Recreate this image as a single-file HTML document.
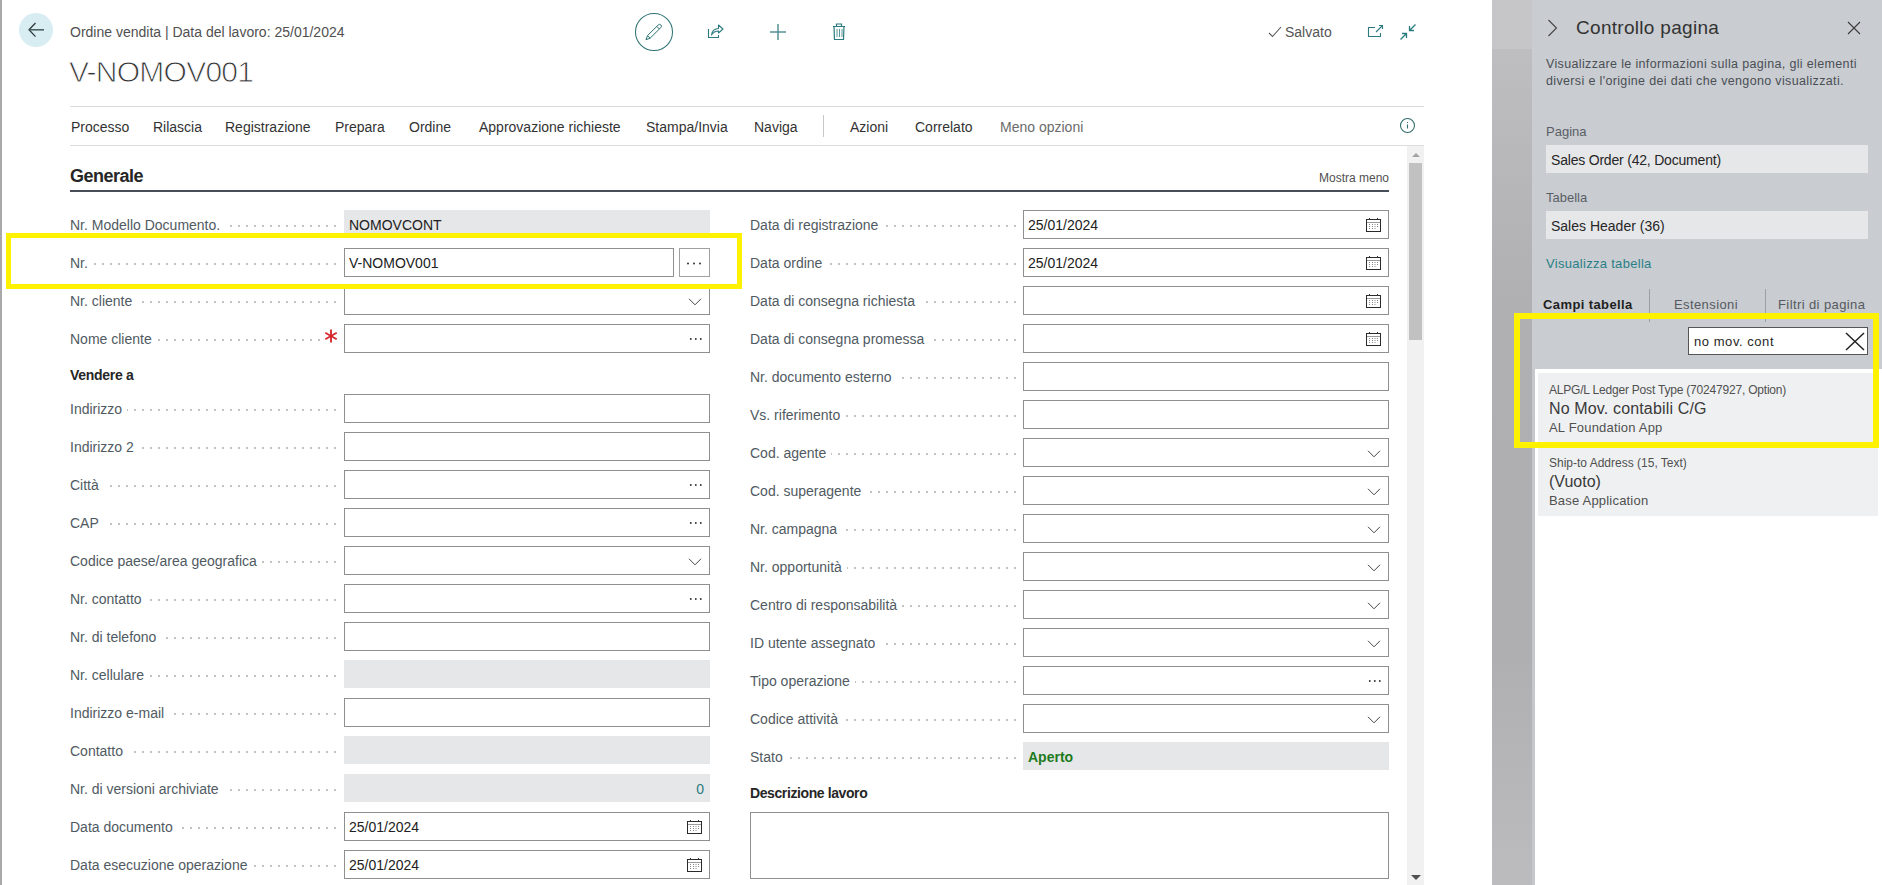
<!DOCTYPE html>
<html><head><meta charset="utf-8"><style>
html,body{margin:0;padding:0;}
body{width:1882px;height:885px;overflow:hidden;position:relative;background:#fff;font-family:"Liberation Sans", sans-serif;}
.a{position:absolute;}
.t{position:absolute;line-height:1;white-space:nowrap;}
.dots{background-image:radial-gradient(circle at 1px 2px, #c3c3c3 1px, rgba(255,255,255,0) 1.4px);background-size:8px 4px;background-position:0 0;background-repeat:repeat-x;}
</style></head><body>
<div class="a" style="left:0px;top:0px;width:2px;height:885px;background:#a9a9a9;"></div>
<div class="a" style="left:19px;top:13px;width:34px;height:34px;background:#d7edf1;border-radius:50%;"></div>
<svg width="20" height="16" viewBox="0 0 20 16" style="position:absolute;left:28px;top:22px"><polyline points="7.5,1 1,7.8 7.5,14.6" fill="none" stroke="#2f3a3d" stroke-width="1.3"/><line x1="1.3" y1="7.8" x2="16" y2="7.8" stroke="#4b6164" stroke-width="1.6"/></svg><div class="t" style="left:70px;top:25.1px;font-size:14px;color:#505050;font-weight:normal;">Ordine vendita | Data del lavoro: 25/01/2024</div>
<div class="t" style="left:69px;top:57.2px;font-size:30px;color:#333;font-weight:normal;letter-spacing:-0.75px;-webkit-text-stroke:0.9px #fff;paint-order:fill;">V-NOMOV001</div>
<svg width="40" height="40" viewBox="0 0 40 40" style="position:absolute;left:634px;top:12px"><circle cx="20" cy="20" r="18.5" fill="none" stroke="#2e7374" stroke-width="1.05"/><path d="M12 27.7 L13.5 23.6 L24.3 12.9 A1.84 1.84 0 0 1 26.9 15.5 L16.1 26.2 Z M13.5 23.6 L16.1 26.2 M22.8 14.4 L25.4 17" fill="none" stroke="#2e7374" stroke-width="1" stroke-linejoin="round"/></svg><svg width="18" height="16" viewBox="0 0 18 16" style="position:absolute;left:707px;top:23px"><path d="M1.5 6 V14.5 H11.5 V12" fill="none" stroke="#2b7b80" stroke-width="1.1"/><path d="M4.5 12 Q5.5 5.5 11.5 5.5 V2 L16 6 L11.5 10 V8 Q7 8 4.5 12 Z" fill="none" stroke="#2b7b80" stroke-width="1.1" stroke-linejoin="round"/></svg><svg width="18" height="18" viewBox="0 0 18 18" style="position:absolute;left:769px;top:23px"><line x1="9" y1="1" x2="9" y2="17" stroke="#4a8a8e" stroke-width="1.4"/><line x1="1" y1="9" x2="17" y2="9" stroke="#4a8a8e" stroke-width="1.4"/></svg><svg width="16" height="18" viewBox="0 0 16 18" style="position:absolute;left:831px;top:23px"><path d="M2 3.5 H14 M5.5 3.5 V1 H10.5 V3.5 M3 3.5 L3.5 16.5 H12.5 L13 3.5 " fill="none" stroke="#2b7b80" stroke-width="1.2"/><path d="M6 6 V14 M8.5 6 V14 M11 6 V14" fill="none" stroke="#2b7b80" stroke-width="0.8"/></svg><svg width="14" height="12" viewBox="0 0 14 12" style="position:absolute;left:1268px;top:26px"><polyline points="1,7 4.5,10.5 13,1" fill="none" stroke="#555" stroke-width="1.1"/></svg><div class="t" style="left:1285px;top:25.1px;font-size:14px;color:#555;font-weight:normal;">Salvato</div>
<svg width="18" height="16" viewBox="0 0 18 16" style="position:absolute;left:1367px;top:24px"><path d="M8 3.5 H1.5 V12.5 H13.5 V9" fill="none" stroke="#2b7b80" stroke-width="1.1"/><path d="M9 8 L15.5 1.5 M12 1.5 H15.5 V5" fill="none" stroke="#2b7b80" stroke-width="1.1"/></svg><svg width="18" height="18" viewBox="0 0 18 18" style="position:absolute;left:1399px;top:23px"><path d="M16.5 1.5 L10.5 7.5 M10.5 3 V7.5 H15 M1.5 16.5 L7.5 10.5 M3 10.5 H7.5 V15" fill="none" stroke="#2b7b80" stroke-width="1.3"/></svg><div class="a" style="left:70px;top:106px;width:1354px;height:1px;background:#dcdcdc;"></div>
<div class="a" style="left:70px;top:145px;width:1354px;height:1px;background:#dcdcdc;"></div>
<div class="t" style="left:71px;top:120.1px;font-size:14px;color:#333;font-weight:normal;">Processo</div>
<div class="t" style="left:153px;top:120.1px;font-size:14px;color:#333;font-weight:normal;">Rilascia</div>
<div class="t" style="left:225px;top:120.1px;font-size:14px;color:#333;font-weight:normal;">Registrazione</div>
<div class="t" style="left:335px;top:120.1px;font-size:14px;color:#333;font-weight:normal;">Prepara</div>
<div class="t" style="left:409px;top:120.1px;font-size:14px;color:#333;font-weight:normal;">Ordine</div>
<div class="t" style="left:479px;top:120.1px;font-size:14px;color:#333;font-weight:normal;">Approvazione richieste</div>
<div class="t" style="left:646px;top:120.1px;font-size:14px;color:#333;font-weight:normal;">Stampa/Invia</div>
<div class="t" style="left:754px;top:120.1px;font-size:14px;color:#333;font-weight:normal;">Naviga</div>
<div class="t" style="left:850px;top:120.1px;font-size:14px;color:#333;font-weight:normal;">Azioni</div>
<div class="t" style="left:915px;top:120.1px;font-size:14px;color:#333;font-weight:normal;">Correlato</div>
<div class="t" style="left:1000px;top:120.1px;font-size:14px;color:#6b6b6b;font-weight:normal;">Meno opzioni</div>
<div class="a" style="left:823px;top:115px;width:1px;height:22px;background:#c8c8c8;"></div>
<svg width="19" height="19" viewBox="0 0 19 19" style="position:absolute;left:1398px;top:116px"><circle cx="9.5" cy="9.5" r="7" fill="none" stroke="#336f6c" stroke-width="1.1"/><line x1="9.5" y1="8.5" x2="9.5" y2="12.5" stroke="#336f6c" stroke-width="1.1"/><rect x="9" y="6" width="1" height="1" fill="#336f6c"/></svg><div class="a" style="left:1407px;top:146px;width:17px;height:739px;background:#f1f1f1;"></div>
<div class="a" style="left:1409px;top:163px;width:13px;height:177px;background:#c1c1c1;"></div>
<svg width="10" height="6" viewBox="0 0 10 6" style="position:absolute;left:1411px;top:152px"><polygon points="1,5 5,1 9,5" fill="#a3a3a3"/></svg><svg width="10" height="6" viewBox="0 0 10 6" style="position:absolute;left:1411px;top:875px"><polygon points="0,0 5,5 10,0" fill="#505050"/></svg><div class="t" style="left:70px;top:166.8px;font-size:18px;color:#262626;font-weight:bold;letter-spacing:-0.5px;">Generale</div>
<div class="t" style="right:493px;top:171.8px;font-size:12px;color:#505050;font-weight:normal;">Mostra meno</div>
<div class="a" style="left:70px;top:190px;width:1319px;height:2px;background:#474d59;"></div>
<div class="a dots" style="left:70px;top:224px;width:268px;height:4px;"></div>
<div class="t" style="left:70px;top:218.1px;font-size:14px;color:#505a62;background:#fff;padding-right:5px">Nr. Modello Documento.</div>
<div class="a" style="left:344px;top:210px;width:366px;height:28px;background:#e6e7e8;"></div>
<div class="t" style="left:349px;top:218.1px;font-size:14px;color:#212121;font-weight:normal;">NOMOVCONT</div>
<div class="a dots" style="left:70px;top:262px;width:268px;height:4px;"></div>
<div class="t" style="left:70px;top:256.1px;font-size:14px;color:#505a62;background:#fff;padding-right:5px">Nr.</div>
<div class="a" style="left:344px;top:248px;width:330px;height:29px;border:1px solid #8f8f8f;box-sizing:border-box;background:#fff;"></div>
<div class="t" style="left:349px;top:256.1px;font-size:14px;color:#212121;font-weight:normal;">V-NOMOV001</div>
<div class="a" style="left:679px;top:248px;width:31px;height:29px;border:1px solid #a0a0a0;box-sizing:border-box;"></div>
<svg width="16" height="4" viewBox="0 0 16 4" style="position:absolute;left:686px;top:262px"><circle cx="2" cy="1.5" r="1" fill="#333"/><circle cx="8" cy="1.5" r="1" fill="#333"/><circle cx="14" cy="1.5" r="1" fill="#333"/></svg><div class="a dots" style="left:70px;top:300px;width:268px;height:4px;"></div>
<div class="t" style="left:70px;top:294.1px;font-size:14px;color:#505a62;background:#fff;padding-right:5px">Nr. cliente</div>
<div class="a" style="left:344px;top:286px;width:366px;height:29px;border:1px solid #8f8f8f;box-sizing:border-box;background:#fff;"></div>
<svg width="14" height="8" viewBox="0 0 14 8" style="position:absolute;left:688px;top:298px"><polyline points="1,0.8 7,6.8 13,0.8" fill="none" stroke="#444" stroke-width="1"/></svg><div class="a dots" style="left:70px;top:338px;width:268px;height:4px;"></div>
<div class="t" style="left:70px;top:332.1px;font-size:14px;color:#505a62;background:#fff;padding-right:5px">Nome cliente</div>
<div class="a" style="left:344px;top:324px;width:366px;height:29px;border:1px solid #8f8f8f;box-sizing:border-box;background:#fff;"></div>
<svg width="14" height="3" viewBox="0 0 14 3" style="position:absolute;left:689px;top:338px"><circle cx="1.8" cy="1" r="0.95" fill="#333"/><circle cx="6.8" cy="1" r="0.95" fill="#333"/><circle cx="11.8" cy="1" r="0.95" fill="#333"/></svg><div class="a dots" style="left:70px;top:408px;width:268px;height:4px;"></div>
<div class="t" style="left:70px;top:402.1px;font-size:14px;color:#505a62;background:#fff;padding-right:5px">Indirizzo</div>
<div class="a" style="left:344px;top:394px;width:366px;height:29px;border:1px solid #8f8f8f;box-sizing:border-box;background:#fff;"></div>
<div class="a dots" style="left:70px;top:446px;width:268px;height:4px;"></div>
<div class="t" style="left:70px;top:440.1px;font-size:14px;color:#505a62;background:#fff;padding-right:5px">Indirizzo 2</div>
<div class="a" style="left:344px;top:432px;width:366px;height:29px;border:1px solid #8f8f8f;box-sizing:border-box;background:#fff;"></div>
<div class="a dots" style="left:70px;top:484px;width:268px;height:4px;"></div>
<div class="t" style="left:70px;top:478.1px;font-size:14px;color:#505a62;background:#fff;padding-right:5px">Città</div>
<div class="a" style="left:344px;top:470px;width:366px;height:29px;border:1px solid #8f8f8f;box-sizing:border-box;background:#fff;"></div>
<svg width="14" height="3" viewBox="0 0 14 3" style="position:absolute;left:689px;top:484px"><circle cx="1.8" cy="1" r="0.95" fill="#333"/><circle cx="6.8" cy="1" r="0.95" fill="#333"/><circle cx="11.8" cy="1" r="0.95" fill="#333"/></svg><div class="a dots" style="left:70px;top:522px;width:268px;height:4px;"></div>
<div class="t" style="left:70px;top:516.1px;font-size:14px;color:#505a62;background:#fff;padding-right:5px">CAP</div>
<div class="a" style="left:344px;top:508px;width:366px;height:29px;border:1px solid #8f8f8f;box-sizing:border-box;background:#fff;"></div>
<svg width="14" height="3" viewBox="0 0 14 3" style="position:absolute;left:689px;top:522px"><circle cx="1.8" cy="1" r="0.95" fill="#333"/><circle cx="6.8" cy="1" r="0.95" fill="#333"/><circle cx="11.8" cy="1" r="0.95" fill="#333"/></svg><div class="a dots" style="left:70px;top:560px;width:268px;height:4px;"></div>
<div class="t" style="left:70px;top:554.1px;font-size:14px;color:#505a62;background:#fff;padding-right:5px">Codice paese/area geografica</div>
<div class="a" style="left:344px;top:546px;width:366px;height:29px;border:1px solid #8f8f8f;box-sizing:border-box;background:#fff;"></div>
<svg width="14" height="8" viewBox="0 0 14 8" style="position:absolute;left:688px;top:558px"><polyline points="1,0.8 7,6.8 13,0.8" fill="none" stroke="#444" stroke-width="1"/></svg><div class="a dots" style="left:70px;top:598px;width:268px;height:4px;"></div>
<div class="t" style="left:70px;top:592.1px;font-size:14px;color:#505a62;background:#fff;padding-right:5px">Nr. contatto</div>
<div class="a" style="left:344px;top:584px;width:366px;height:29px;border:1px solid #8f8f8f;box-sizing:border-box;background:#fff;"></div>
<svg width="14" height="3" viewBox="0 0 14 3" style="position:absolute;left:689px;top:598px"><circle cx="1.8" cy="1" r="0.95" fill="#333"/><circle cx="6.8" cy="1" r="0.95" fill="#333"/><circle cx="11.8" cy="1" r="0.95" fill="#333"/></svg><div class="a dots" style="left:70px;top:636px;width:268px;height:4px;"></div>
<div class="t" style="left:70px;top:630.1px;font-size:14px;color:#505a62;background:#fff;padding-right:5px">Nr. di telefono</div>
<div class="a" style="left:344px;top:622px;width:366px;height:29px;border:1px solid #8f8f8f;box-sizing:border-box;background:#fff;"></div>
<div class="a dots" style="left:70px;top:674px;width:268px;height:4px;"></div>
<div class="t" style="left:70px;top:668.1px;font-size:14px;color:#505a62;background:#fff;padding-right:5px">Nr. cellulare</div>
<div class="a" style="left:344px;top:660px;width:366px;height:28px;background:#e6e7e8;"></div>
<div class="a dots" style="left:70px;top:712px;width:268px;height:4px;"></div>
<div class="t" style="left:70px;top:706.1px;font-size:14px;color:#505a62;background:#fff;padding-right:5px">Indirizzo e-mail</div>
<div class="a" style="left:344px;top:698px;width:366px;height:29px;border:1px solid #8f8f8f;box-sizing:border-box;background:#fff;"></div>
<div class="a dots" style="left:70px;top:750px;width:268px;height:4px;"></div>
<div class="t" style="left:70px;top:744.1px;font-size:14px;color:#505a62;background:#fff;padding-right:5px">Contatto</div>
<div class="a" style="left:344px;top:736px;width:366px;height:28px;background:#e6e7e8;"></div>
<div class="a dots" style="left:70px;top:788px;width:268px;height:4px;"></div>
<div class="t" style="left:70px;top:782.1px;font-size:14px;color:#505a62;background:#fff;padding-right:5px">Nr. di versioni archiviate</div>
<div class="a" style="left:344px;top:774px;width:366px;height:28px;background:#e6e7e8;"></div>
<div class="t" style="right:1178px;top:782.1px;font-size:14px;color:#2b7b80;font-weight:normal;">0</div>
<div class="a dots" style="left:70px;top:826px;width:268px;height:4px;"></div>
<div class="t" style="left:70px;top:820.1px;font-size:14px;color:#505a62;background:#fff;padding-right:5px">Data documento</div>
<div class="a" style="left:344px;top:812px;width:366px;height:29px;border:1px solid #8f8f8f;box-sizing:border-box;background:#fff;"></div>
<div class="t" style="left:349px;top:820.1px;font-size:14px;color:#212121;font-weight:normal;">25/01/2024</div>
<svg width="16" height="15" viewBox="0 0 16 15" style="position:absolute;left:687px;top:820px"><rect x="0.5" y="1.5" width="14" height="12" fill="none" stroke="#2a2a2a" stroke-width="1"/><line x1="1" y1="4.5" x2="14" y2="4.5" stroke="#9a9a9a" stroke-width="1"/><line x1="3.5" y1="0" x2="3.5" y2="2" stroke="#333"/><line x1="11.5" y1="0" x2="11.5" y2="2" stroke="#333"/><g fill="#8a8a8a"><rect x="3" y="6" width="1" height="1"/><rect x="6" y="6" width="1" height="1"/><rect x="8.5" y="6" width="1" height="1"/><rect x="11" y="6" width="1" height="1"/><rect x="3" y="8" width="1" height="1"/><rect x="6" y="8" width="1" height="1"/><rect x="8.5" y="8" width="1" height="1"/><rect x="11" y="8" width="1" height="1"/><rect x="3" y="10" width="1" height="1"/><rect x="6" y="10" width="1" height="1"/><rect x="8.5" y="10" width="1" height="1"/></g></svg><div class="a dots" style="left:70px;top:864px;width:268px;height:4px;"></div>
<div class="t" style="left:70px;top:858.1px;font-size:14px;color:#505a62;background:#fff;padding-right:5px">Data esecuzione operazione</div>
<div class="a" style="left:344px;top:850px;width:366px;height:29px;border:1px solid #8f8f8f;box-sizing:border-box;background:#fff;"></div>
<div class="t" style="left:349px;top:858.1px;font-size:14px;color:#212121;font-weight:normal;">25/01/2024</div>
<svg width="16" height="15" viewBox="0 0 16 15" style="position:absolute;left:687px;top:858px"><rect x="0.5" y="1.5" width="14" height="12" fill="none" stroke="#2a2a2a" stroke-width="1"/><line x1="1" y1="4.5" x2="14" y2="4.5" stroke="#9a9a9a" stroke-width="1"/><line x1="3.5" y1="0" x2="3.5" y2="2" stroke="#333"/><line x1="11.5" y1="0" x2="11.5" y2="2" stroke="#333"/><g fill="#8a8a8a"><rect x="3" y="6" width="1" height="1"/><rect x="6" y="6" width="1" height="1"/><rect x="8.5" y="6" width="1" height="1"/><rect x="11" y="6" width="1" height="1"/><rect x="3" y="8" width="1" height="1"/><rect x="6" y="8" width="1" height="1"/><rect x="8.5" y="8" width="1" height="1"/><rect x="11" y="8" width="1" height="1"/><rect x="3" y="10" width="1" height="1"/><rect x="6" y="10" width="1" height="1"/><rect x="8.5" y="10" width="1" height="1"/></g></svg><div class="a" style="left:321px;top:326px;width:21px;height:20px;background:#fff;"></div>
<svg width="20" height="20" viewBox="0 0 20 20" style="position:absolute;left:321px;top:326px"><g stroke="#d42a2f" stroke-width="1.9"><line x1="10" y1="3.4" x2="10" y2="16.6"/><line x1="4.3" y1="6.7" x2="15.7" y2="13.3"/><line x1="4.3" y1="13.3" x2="15.7" y2="6.7"/></g></svg><div class="t" style="left:70px;top:368.1px;font-size:14px;color:#262626;font-weight:bold;letter-spacing:-0.3px;">Vendere a</div>
<div class="a dots" style="left:750px;top:224px;width:268px;height:4px;"></div>
<div class="t" style="left:750px;top:218.1px;font-size:14px;color:#505a62;background:#fff;padding-right:5px">Data di registrazione</div>
<div class="a" style="left:1023px;top:210px;width:366px;height:29px;border:1px solid #8f8f8f;box-sizing:border-box;background:#fff;"></div>
<div class="t" style="left:1028px;top:218.1px;font-size:14px;color:#212121;font-weight:normal;">25/01/2024</div>
<svg width="16" height="15" viewBox="0 0 16 15" style="position:absolute;left:1366px;top:218px"><rect x="0.5" y="1.5" width="14" height="12" fill="none" stroke="#2a2a2a" stroke-width="1"/><line x1="1" y1="4.5" x2="14" y2="4.5" stroke="#9a9a9a" stroke-width="1"/><line x1="3.5" y1="0" x2="3.5" y2="2" stroke="#333"/><line x1="11.5" y1="0" x2="11.5" y2="2" stroke="#333"/><g fill="#8a8a8a"><rect x="3" y="6" width="1" height="1"/><rect x="6" y="6" width="1" height="1"/><rect x="8.5" y="6" width="1" height="1"/><rect x="11" y="6" width="1" height="1"/><rect x="3" y="8" width="1" height="1"/><rect x="6" y="8" width="1" height="1"/><rect x="8.5" y="8" width="1" height="1"/><rect x="11" y="8" width="1" height="1"/><rect x="3" y="10" width="1" height="1"/><rect x="6" y="10" width="1" height="1"/><rect x="8.5" y="10" width="1" height="1"/></g></svg><div class="a dots" style="left:750px;top:262px;width:268px;height:4px;"></div>
<div class="t" style="left:750px;top:256.1px;font-size:14px;color:#505a62;background:#fff;padding-right:5px">Data ordine</div>
<div class="a" style="left:1023px;top:248px;width:366px;height:29px;border:1px solid #8f8f8f;box-sizing:border-box;background:#fff;"></div>
<div class="t" style="left:1028px;top:256.1px;font-size:14px;color:#212121;font-weight:normal;">25/01/2024</div>
<svg width="16" height="15" viewBox="0 0 16 15" style="position:absolute;left:1366px;top:256px"><rect x="0.5" y="1.5" width="14" height="12" fill="none" stroke="#2a2a2a" stroke-width="1"/><line x1="1" y1="4.5" x2="14" y2="4.5" stroke="#9a9a9a" stroke-width="1"/><line x1="3.5" y1="0" x2="3.5" y2="2" stroke="#333"/><line x1="11.5" y1="0" x2="11.5" y2="2" stroke="#333"/><g fill="#8a8a8a"><rect x="3" y="6" width="1" height="1"/><rect x="6" y="6" width="1" height="1"/><rect x="8.5" y="6" width="1" height="1"/><rect x="11" y="6" width="1" height="1"/><rect x="3" y="8" width="1" height="1"/><rect x="6" y="8" width="1" height="1"/><rect x="8.5" y="8" width="1" height="1"/><rect x="11" y="8" width="1" height="1"/><rect x="3" y="10" width="1" height="1"/><rect x="6" y="10" width="1" height="1"/><rect x="8.5" y="10" width="1" height="1"/></g></svg><div class="a dots" style="left:750px;top:300px;width:268px;height:4px;"></div>
<div class="t" style="left:750px;top:294.1px;font-size:14px;color:#505a62;background:#fff;padding-right:5px">Data di consegna richiesta</div>
<div class="a" style="left:1023px;top:286px;width:366px;height:29px;border:1px solid #8f8f8f;box-sizing:border-box;background:#fff;"></div>
<svg width="16" height="15" viewBox="0 0 16 15" style="position:absolute;left:1366px;top:294px"><rect x="0.5" y="1.5" width="14" height="12" fill="none" stroke="#2a2a2a" stroke-width="1"/><line x1="1" y1="4.5" x2="14" y2="4.5" stroke="#9a9a9a" stroke-width="1"/><line x1="3.5" y1="0" x2="3.5" y2="2" stroke="#333"/><line x1="11.5" y1="0" x2="11.5" y2="2" stroke="#333"/><g fill="#8a8a8a"><rect x="3" y="6" width="1" height="1"/><rect x="6" y="6" width="1" height="1"/><rect x="8.5" y="6" width="1" height="1"/><rect x="11" y="6" width="1" height="1"/><rect x="3" y="8" width="1" height="1"/><rect x="6" y="8" width="1" height="1"/><rect x="8.5" y="8" width="1" height="1"/><rect x="11" y="8" width="1" height="1"/><rect x="3" y="10" width="1" height="1"/><rect x="6" y="10" width="1" height="1"/><rect x="8.5" y="10" width="1" height="1"/></g></svg><div class="a dots" style="left:750px;top:338px;width:268px;height:4px;"></div>
<div class="t" style="left:750px;top:332.1px;font-size:14px;color:#505a62;background:#fff;padding-right:5px">Data di consegna promessa</div>
<div class="a" style="left:1023px;top:324px;width:366px;height:29px;border:1px solid #8f8f8f;box-sizing:border-box;background:#fff;"></div>
<svg width="16" height="15" viewBox="0 0 16 15" style="position:absolute;left:1366px;top:332px"><rect x="0.5" y="1.5" width="14" height="12" fill="none" stroke="#2a2a2a" stroke-width="1"/><line x1="1" y1="4.5" x2="14" y2="4.5" stroke="#9a9a9a" stroke-width="1"/><line x1="3.5" y1="0" x2="3.5" y2="2" stroke="#333"/><line x1="11.5" y1="0" x2="11.5" y2="2" stroke="#333"/><g fill="#8a8a8a"><rect x="3" y="6" width="1" height="1"/><rect x="6" y="6" width="1" height="1"/><rect x="8.5" y="6" width="1" height="1"/><rect x="11" y="6" width="1" height="1"/><rect x="3" y="8" width="1" height="1"/><rect x="6" y="8" width="1" height="1"/><rect x="8.5" y="8" width="1" height="1"/><rect x="11" y="8" width="1" height="1"/><rect x="3" y="10" width="1" height="1"/><rect x="6" y="10" width="1" height="1"/><rect x="8.5" y="10" width="1" height="1"/></g></svg><div class="a dots" style="left:750px;top:376px;width:268px;height:4px;"></div>
<div class="t" style="left:750px;top:370.1px;font-size:14px;color:#505a62;background:#fff;padding-right:5px">Nr. documento esterno</div>
<div class="a" style="left:1023px;top:362px;width:366px;height:29px;border:1px solid #8f8f8f;box-sizing:border-box;background:#fff;"></div>
<div class="a dots" style="left:750px;top:414px;width:268px;height:4px;"></div>
<div class="t" style="left:750px;top:408.1px;font-size:14px;color:#505a62;background:#fff;padding-right:5px">Vs. riferimento</div>
<div class="a" style="left:1023px;top:400px;width:366px;height:29px;border:1px solid #8f8f8f;box-sizing:border-box;background:#fff;"></div>
<div class="a dots" style="left:750px;top:452px;width:268px;height:4px;"></div>
<div class="t" style="left:750px;top:446.1px;font-size:14px;color:#505a62;background:#fff;padding-right:5px">Cod. agente</div>
<div class="a" style="left:1023px;top:438px;width:366px;height:29px;border:1px solid #8f8f8f;box-sizing:border-box;background:#fff;"></div>
<svg width="14" height="8" viewBox="0 0 14 8" style="position:absolute;left:1367px;top:450px"><polyline points="1,0.8 7,6.8 13,0.8" fill="none" stroke="#444" stroke-width="1"/></svg><div class="a dots" style="left:750px;top:490px;width:268px;height:4px;"></div>
<div class="t" style="left:750px;top:484.1px;font-size:14px;color:#505a62;background:#fff;padding-right:5px">Cod. superagente</div>
<div class="a" style="left:1023px;top:476px;width:366px;height:29px;border:1px solid #8f8f8f;box-sizing:border-box;background:#fff;"></div>
<svg width="14" height="8" viewBox="0 0 14 8" style="position:absolute;left:1367px;top:488px"><polyline points="1,0.8 7,6.8 13,0.8" fill="none" stroke="#444" stroke-width="1"/></svg><div class="a dots" style="left:750px;top:528px;width:268px;height:4px;"></div>
<div class="t" style="left:750px;top:522.1px;font-size:14px;color:#505a62;background:#fff;padding-right:5px">Nr. campagna</div>
<div class="a" style="left:1023px;top:514px;width:366px;height:29px;border:1px solid #8f8f8f;box-sizing:border-box;background:#fff;"></div>
<svg width="14" height="8" viewBox="0 0 14 8" style="position:absolute;left:1367px;top:526px"><polyline points="1,0.8 7,6.8 13,0.8" fill="none" stroke="#444" stroke-width="1"/></svg><div class="a dots" style="left:750px;top:566px;width:268px;height:4px;"></div>
<div class="t" style="left:750px;top:560.1px;font-size:14px;color:#505a62;background:#fff;padding-right:5px">Nr. opportunità</div>
<div class="a" style="left:1023px;top:552px;width:366px;height:29px;border:1px solid #8f8f8f;box-sizing:border-box;background:#fff;"></div>
<svg width="14" height="8" viewBox="0 0 14 8" style="position:absolute;left:1367px;top:564px"><polyline points="1,0.8 7,6.8 13,0.8" fill="none" stroke="#444" stroke-width="1"/></svg><div class="a dots" style="left:750px;top:604px;width:268px;height:4px;"></div>
<div class="t" style="left:750px;top:598.1px;font-size:14px;color:#505a62;background:#fff;padding-right:5px">Centro di responsabilità</div>
<div class="a" style="left:1023px;top:590px;width:366px;height:29px;border:1px solid #8f8f8f;box-sizing:border-box;background:#fff;"></div>
<svg width="14" height="8" viewBox="0 0 14 8" style="position:absolute;left:1367px;top:602px"><polyline points="1,0.8 7,6.8 13,0.8" fill="none" stroke="#444" stroke-width="1"/></svg><div class="a dots" style="left:750px;top:642px;width:268px;height:4px;"></div>
<div class="t" style="left:750px;top:636.1px;font-size:14px;color:#505a62;background:#fff;padding-right:5px">ID utente assegnato</div>
<div class="a" style="left:1023px;top:628px;width:366px;height:29px;border:1px solid #8f8f8f;box-sizing:border-box;background:#fff;"></div>
<svg width="14" height="8" viewBox="0 0 14 8" style="position:absolute;left:1367px;top:640px"><polyline points="1,0.8 7,6.8 13,0.8" fill="none" stroke="#444" stroke-width="1"/></svg><div class="a dots" style="left:750px;top:680px;width:268px;height:4px;"></div>
<div class="t" style="left:750px;top:674.1px;font-size:14px;color:#505a62;background:#fff;padding-right:5px">Tipo operazione</div>
<div class="a" style="left:1023px;top:666px;width:366px;height:29px;border:1px solid #8f8f8f;box-sizing:border-box;background:#fff;"></div>
<svg width="14" height="3" viewBox="0 0 14 3" style="position:absolute;left:1368px;top:680px"><circle cx="1.8" cy="1" r="0.95" fill="#333"/><circle cx="6.8" cy="1" r="0.95" fill="#333"/><circle cx="11.8" cy="1" r="0.95" fill="#333"/></svg><div class="a dots" style="left:750px;top:718px;width:268px;height:4px;"></div>
<div class="t" style="left:750px;top:712.1px;font-size:14px;color:#505a62;background:#fff;padding-right:5px">Codice attività</div>
<div class="a" style="left:1023px;top:704px;width:366px;height:29px;border:1px solid #8f8f8f;box-sizing:border-box;background:#fff;"></div>
<svg width="14" height="8" viewBox="0 0 14 8" style="position:absolute;left:1367px;top:716px"><polyline points="1,0.8 7,6.8 13,0.8" fill="none" stroke="#444" stroke-width="1"/></svg><div class="a dots" style="left:750px;top:756px;width:268px;height:4px;"></div>
<div class="t" style="left:750px;top:750.1px;font-size:14px;color:#505a62;background:#fff;padding-right:5px">Stato</div>
<div class="a" style="left:1023px;top:742px;width:366px;height:28px;background:#e6e7e8;"></div>
<div class="t" style="left:1028px;top:750.1px;font-size:14px;color:#1e7b1e;font-weight:bold;">Aperto</div>
<div class="t" style="left:750px;top:786.1px;font-size:14px;color:#262626;font-weight:bold;letter-spacing:-0.4px;">Descrizione lavoro</div>
<div class="a" style="left:750px;top:812px;width:639px;height:67px;border:1px solid #8f8f8f;box-sizing:border-box;"></div>
<div class="a" style="left:6px;top:233px;width:736px;height:56px;border:5px solid #fff200;box-sizing:border-box;"></div>
<div class="a" style="left:1492px;top:0px;width:40px;height:885px;background:linear-gradient(#c6c5c7 0, #c6c5c7 49px, #bebdbf 49px, #b0b0b2 300px, #afafb1 650px, #bcbcbe 885px);"></div>
<div class="a" style="left:1532px;top:0px;width:350px;height:885px;background:#c9ccd1;"></div>
<svg width="12" height="18" viewBox="0 0 12 18" style="position:absolute;left:1547px;top:19px"><polyline points="1.5,1 9.5,9 1.5,17" fill="none" stroke="#444" stroke-width="1.1"/></svg><div class="t" style="left:1576px;top:18.4px;font-size:19px;color:#333;font-weight:normal;letter-spacing:0.3px;">Controllo pagina</div>
<svg width="14" height="14" viewBox="0 0 14 14" style="position:absolute;left:1847px;top:21px"><path d="M1 1 L13 13 M13 1 L1 13" stroke="#3a3a3a" stroke-width="1.1"/></svg><div class="t" style="left:1546px;top:58.4px;font-size:12.5px;color:#4a4f55;font-weight:normal;letter-spacing:0.35px;">Visualizzare le informazioni sulla pagina, gli elementi</div>
<div class="t" style="left:1546px;top:74.9px;font-size:12.5px;color:#4a4f55;font-weight:normal;letter-spacing:0.35px;">diversi e l'origine dei dati che vengono visualizzati.</div>
<div class="t" style="left:1546px;top:125.0px;font-size:13px;color:#5a5f66;font-weight:normal;">Pagina</div>
<div class="a" style="left:1546px;top:145px;width:322px;height:28px;background:#e6e7e9;"></div>
<div class="t" style="left:1551px;top:153.1px;font-size:14px;color:#262626;font-weight:normal;letter-spacing:-0.2px;">Sales Order (42, Document)</div>
<div class="t" style="left:1546px;top:191.0px;font-size:13px;color:#5a5f66;font-weight:normal;">Tabella</div>
<div class="a" style="left:1546px;top:211px;width:322px;height:28px;background:#e6e7e9;"></div>
<div class="t" style="left:1551px;top:219.1px;font-size:14px;color:#262626;font-weight:normal;">Sales Header (36)</div>
<div class="t" style="left:1546px;top:257.0px;font-size:13px;color:#2a7f86;font-weight:normal;letter-spacing:0.3px;">Visualizza tabella</div>
<div class="t" style="left:1543px;top:297.5px;font-size:13px;color:#1f1f1f;font-weight:bold;letter-spacing:0.4px;">Campi tabella</div>
<div class="a" style="left:1649px;top:289px;width:1px;height:33px;background:#9a9ea5;"></div>
<div class="t" style="left:1674px;top:297.5px;font-size:13px;color:#555a60;font-weight:normal;letter-spacing:0.4px;">Estensioni</div>
<div class="a" style="left:1765px;top:289px;width:1px;height:33px;background:#9a9ea5;"></div>
<div class="t" style="left:1778px;top:297.5px;font-size:13px;color:#555a60;font-weight:normal;letter-spacing:0.4px;">Filtri di pagina</div>
<div class="a" style="left:1688px;top:327px;width:180px;height:28px;background:#fff;border:1px solid #555;box-sizing:border-box;"></div>
<div class="t" style="left:1694px;top:335.0px;font-size:13px;color:#262626;font-weight:normal;letter-spacing:0.55px;">no mov. cont</div>
<svg width="20" height="19" viewBox="0 0 20 19" style="position:absolute;left:1845px;top:332px"><path d="M1 1 L19 18 M19 1 L1 18" stroke="#222" stroke-width="1.5"/></svg><div class="a" style="left:1535px;top:369px;width:347px;height:516px;background:#fff;"></div>
<div class="a" style="left:1532px;top:369px;width:3px;height:516px;background:#c6c7ca;"></div>
<div class="a" style="left:1538px;top:373px;width:340px;height:71px;background:#eff0f2;"></div>
<div class="t" style="left:1549px;top:383.8px;font-size:12px;color:#505050;font-weight:normal;letter-spacing:-0.2px;">ALPG/L Ledger Post Type (70247927, Option)</div>
<div class="t" style="left:1549px;top:400.5px;font-size:16px;color:#3a3a3a;font-weight:normal;letter-spacing:0.15px;">No Mov. contabili C/G</div>
<div class="t" style="left:1549px;top:420.5px;font-size:13px;color:#505050;font-weight:normal;letter-spacing:0.2px;">AL Foundation App</div>
<div class="a" style="left:1538px;top:446px;width:340px;height:70px;background:#eff0f2;"></div>
<div class="t" style="left:1549px;top:456.8px;font-size:12px;color:#505050;font-weight:normal;">Ship-to Address (15, Text)</div>
<div class="t" style="left:1549px;top:473.5px;font-size:16px;color:#3a3a3a;font-weight:normal;">(Vuoto)</div>
<div class="t" style="left:1549px;top:493.5px;font-size:13px;color:#505050;font-weight:normal;letter-spacing:0.2px;">Base Application</div>
<div class="a" style="left:1514px;top:313px;width:365px;height:135px;border:6px solid #fff200;box-sizing:border-box;"></div>
</body></html>
